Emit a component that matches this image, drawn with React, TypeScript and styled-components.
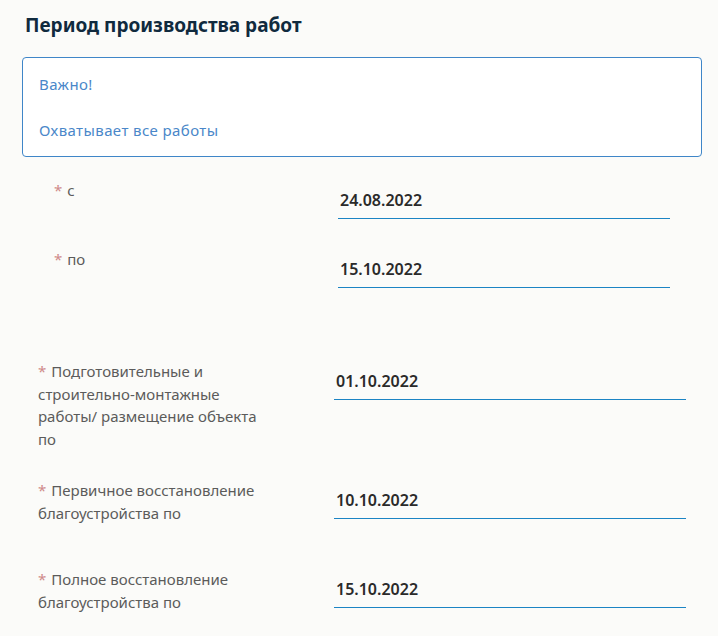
import React from "react";
import styled, { createGlobalStyle } from "styled-components";

const Global = createGlobalStyle`
  html, body { margin: 0; padding: 0; background: #fbfbf9; }
  body { font-family: "Noto Sans", "Open Sans", sans-serif; }
`;

const Page = styled.div`
  padding: 12px 16px 0 22px;
`;

const Title = styled.h2`
  margin: 0 0 19px 3px;
  font-size: 19px;
  line-height: 26px;
  font-weight: 700;
  color: #102a3e;
`;

const Alert = styled.div`
  border: 1px solid #3f86c8;
  border-radius: 4px;
  background: #ffffff;
  padding: 15px 16px;
  display: flex;
  flex-direction: column;
  gap: 24px;
  color: #4a87c9;
  font-size: 15px;
  line-height: 22px;
  letter-spacing: 0.4px;
`;

const Section = styled.div<{ $inset: number; $top: number }>`
  margin-top: ${(p) => p.$top}px;
  padding: 0 ${(p) => p.$inset}px;
  display: flex;
  flex-direction: column;
`;

const Row = styled.div<{ $label: number; $min: number; $gap: number }>`
  display: grid;
  grid-template-columns: ${(p) => p.$label}px 1fr;
  align-items: start;
  min-height: ${(p) => p.$min}px;
  margin-bottom: ${(p) => p.$gap}px;
  &:last-child {
    margin-bottom: 0;
  }
`;

const Label = styled.div`
  max-width: 232px;
  font-size: 15px;
  line-height: 22.5px;
  color: #5b5b5b;
`;

const Star = styled.span`
  color: #cf8a8a;
  margin-right: 5px;
`;

const Field = styled.div`
  height: 40px;
  box-sizing: border-box;
  padding: 10px 2px 0;
  border-bottom: 1px solid #1b84c4;
  font-size: 16px;
  line-height: 22px;
  font-weight: 600;
  color: #2a2a2a;
`;

type Item = { label: string; value: string };

const top: Item[] = [
  { label: "с", value: "24.08.2022" },
  { label: "по", value: "15.10.2022" },
];

const bottom: Item[] = [
  {
    label: "Подготовительные и строительно-монтажные работы/ размещение объекта по",
    value: "01.10.2022",
  },
  { label: "Первичное восстановление благоустройства по", value: "10.10.2022" },
  { label: "Полное восстановление благоустройства по", value: "15.10.2022" },
];

export default function App() {
  return (
    <>
      <Global />
      <Page>
        <Title>Период производства работ</Title>
        <Alert>
          <div>Важно!</div>
          <div>Охватывает все работы</div>
        </Alert>
        <Section $inset={32} $top={22}>
          {top.map((it) => (
            <Row key={it.value + it.label} $label={284} $min={41} $gap={28}>
              <Label>
                <Star>*</Star>
                {it.label}
              </Label>
              <Field>{it.value}</Field>
            </Row>
          ))}
        </Section>
        <Section $inset={16} $top={71}>
          {bottom.map((it) => (
            <Row key={it.value + it.label} $label={296} $min={60} $gap={29}>
              <Label>
                <Star>*</Star>
                {it.label}
              </Label>
              <Field>{it.value}</Field>
            </Row>
          ))}
        </Section>
      </Page>
    </>
  );
}
